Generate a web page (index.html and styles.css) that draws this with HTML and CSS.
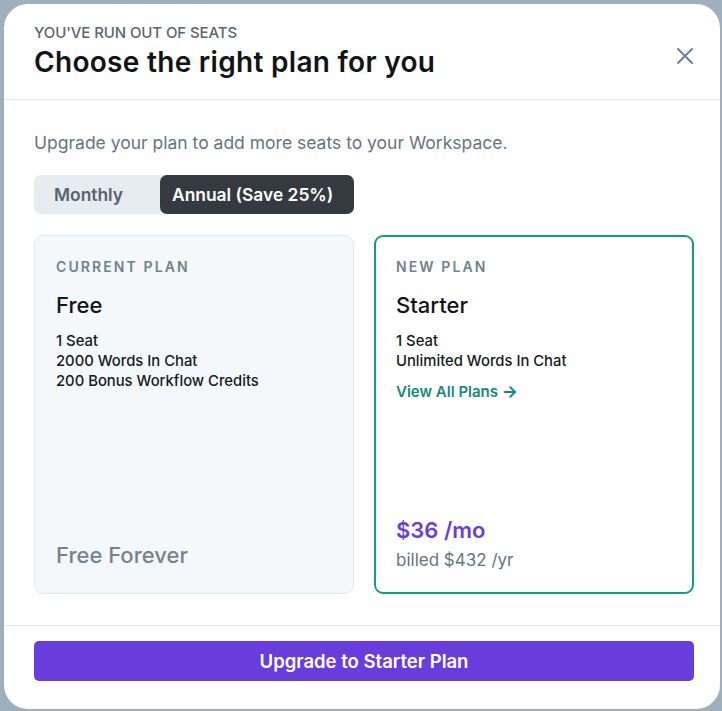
FILE: index.html
```html
<!DOCTYPE html>
<html>
<head>
<meta charset="utf-8">
<link rel="stylesheet" href="styles.css">
</head>
<body>
<div class="modal">
  <div class="header">
    <div class="titles">
      <div class="eyebrow">YOU'VE RUN OUT OF SEATS</div>
      <h1 class="title">Choose the right plan for you</h1>
    </div>
    <button class="close" aria-label="Close">
      <svg width="18" height="18" viewBox="0 0 18 18"><path d="M2 2 L16 16 M16 2 L2 16" stroke="#6b7f94" stroke-width="2" stroke-linecap="round" fill="none"/></svg>
    </button>
  </div>
  <div class="body">
    <p class="intro">Upgrade your plan to add more seats to your Workspace.</p>
    <div class="toggle">
      <span class="opt">Monthly</span>
      <span class="opt active">Annual (Save 25%)</span>
    </div>
    <div class="cards">
      <div class="card current">
        <div class="label">CURRENT PLAN</div>
        <div class="name">Free</div>
        <ul class="features">
          <li>1 Seat</li>
          <li>2000 Words In Chat</li>
          <li>200 Bonus Workflow Credits</li>
        </ul>
        <div class="bottom">
          <div class="forever">Free Forever</div>
        </div>
      </div>
      <div class="card new">
        <div class="label">NEW PLAN</div>
        <div class="name">Starter</div>
        <ul class="features">
          <li>1 Seat</li>
          <li>Unlimited Words In Chat</li>
        </ul>
        <a class="link">View All Plans <span class="arrow">→</span></a>
        <div class="bottom">
          <div class="price">$36 /mo</div>
          <div class="billed">billed $432 /yr</div>
        </div>
      </div>
    </div>
  </div>
  <div class="footer">
    <button class="cta">Upgrade to Starter Plan</button>
  </div>
</div>
</body>
</html>
```
FILE: styles.css
```css
* { box-sizing: border-box; }
html, body { margin: 0; padding: 0; }
body {
  background: #9fb0bc;
  font-family: Inter, "Noto Sans", "Liberation Sans", sans-serif;
  height: 711px;
  overflow: hidden;
}
.modal {
  margin: 4px 2px 0 4px;
  width: 716px;
  height: 705px;
  background: #fff;
  border-radius: 24px;
  display: flex;
  flex-direction: column;
}
.header {
  display: flex;
  justify-content: space-between;
  align-items: flex-start;
  padding: 19px 26px 21px 30px;
  border-bottom: 1px solid #e4e7ea;
}
.eyebrow {
  font-size: 15px;
  line-height: 20px;
  font-weight: 500;
  color: #5a6570;
  letter-spacing: -0.1px;
}
.title {
  margin: 3px 0 0;
  font-size: 28px;
  line-height: 32px;
  font-weight: 600;
  color: #111417;
  letter-spacing: 0.3px;
}
.close {
  border: 0;
  background: none;
  padding: 0;
  margin-top: 24px;
  width: 18px;
  height: 18px;
  display: flex;
}
.body {
  padding: 31px 26px 30px 30px;
  flex: 1;
  display: flex;
  flex-direction: column;
}
.intro {
  margin: 0;
  font-size: 17.5px;
  line-height: 24px;
  color: #66747f;
}
.toggle {
  margin-top: 20px;
  width: 320px;
  height: 39px;
  background: #e6ecf0;
  border-radius: 7px;
  display: flex;
  align-items: stretch;
}
.opt {
  display: flex;
  align-items: center;
  font-size: 17.4px;
  font-weight: 600;
  color: #56636e;
  padding-left: 20px;
  width: 126px;
}
.opt.active {
  width: 194px;
  background: #343a40;
  color: #fff;
  border-radius: 7px;
  padding-left: 12px;
}
.cards {
  margin-top: 21px;
  display: grid;
  grid-template-columns: 320px 320px;
  gap: 20px;
  height: 359px;
}
.card {
  border-radius: 9px;
  padding: 21px 21px 21px 21px;
  display: flex;
  flex-direction: column;
}
.card.current {
  background: #f5f8fa;
  border: 1.5px solid #e3e8eb;
}
.card.new {
  background: #fff;
  border: 2px solid #169a86;
  padding: 20px 20px 20px 20px;
}
.label {
  font-size: 14px;
  line-height: 20px;
  font-weight: 600;
  letter-spacing: 2.1px;
  color: #6f8290;
}
.name {
  margin-top: 14px;
  font-size: 22px;
  line-height: 28px;
  font-weight: 500;
  color: #111417;
}
.features {
  list-style: none;
  margin: 12px 0 0;
  padding: 0;
  font-size: 14.8px;
  line-height: 20px;
  font-weight: 500;
  color: #15191c;
}
.link {
  margin-top: 10px;
  font-size: 15px;
  line-height: 20px;
  font-weight: 600;
  color: #148a79;
}
.arrow { font-weight: 700; font-size: 17px; }
.bottom {
  margin-top: auto;
}
.forever {
  font-size: 22px;
  line-height: 30px;
  font-weight: 500;
  color: #74848f;
  margin-bottom: 2px;
}
.price {
  font-size: 22px;
  line-height: 30px;
  font-weight: 600;
  color: #6b3fd5;
}
.billed {
  margin-top: 3px;
  font-size: 17px;
  line-height: 24px;
  color: #69747e;
}
.footer {
  border-top: 1px solid #e4e7ea;
  padding: 15px 26px 28px 30px;
}
.cta {
  width: 660px;
  height: 40px;
  border: 0;
  border-radius: 5px;
  background: #683ddc;
  color: #fff;
  font-family: inherit;
  font-size: 18.5px;
  font-weight: 600;
}
```
